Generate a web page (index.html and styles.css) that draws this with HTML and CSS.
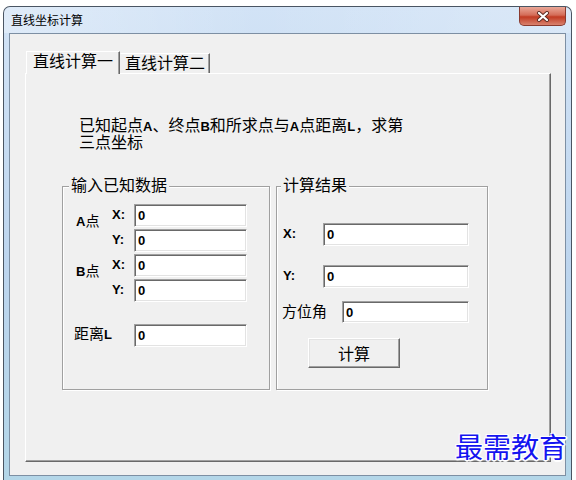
FILE: index.html
```html
<!DOCTYPE html>
<html lang="zh-CN">
<head>
    <meta charset="UTF-8">
    <meta name="viewport" content="width=device-width, initial-scale=1.0">
    <title>直线坐标计算</title>
    <link rel="stylesheet" href="styles.css">
</head>
<body>
    <div class="window">
        <div class="titlebar">
            <span class="title">直线坐标计算</span>
            <button class="close-btn">
                <svg width="14" height="11" viewBox="0 0 14 11">
                    <path d="M3 2 L11 9 M11 2 L3 9" stroke="#5a2a22" stroke-width="4" stroke-linecap="round"/>
                    <path d="M3 2 L11 9 M11 2 L3 9" stroke="#fff" stroke-width="2.2" stroke-linecap="round"/>
                </svg>
            </button>
        </div>

        <div class="client">
            <div class="tabs">
                <div class="tab active">直线计算一</div>
                <div class="tab second">直线计算二</div>
            </div>

            <div class="panel">
                <p class="desc">已知起点<b>A</b>、终点<b>B</b>和所求点与<b>A</b>点距离<b>L</b>，求第<br>三点坐标</p>

                <div class="groups">
                    <div class="group group-input">
                        <span class="group-title">输入已知数据</span>
                        <div class="input-body">
                            <div class="point">
                                <span class="pt-name"><b>A</b>点</span>
                                <div class="coords">
                                    <div class="row"><span class="axis">X:</span><input class="field" value="0"></div>
                                    <div class="row"><span class="axis">Y:</span><input class="field" value="0"></div>
                                </div>
                            </div>
                            <div class="point">
                                <span class="pt-name"><b>B</b>点</span>
                                <div class="coords">
                                    <div class="row"><span class="axis">X:</span><input class="field" value="0"></div>
                                    <div class="row"><span class="axis">Y:</span><input class="field" value="0"></div>
                                </div>
                            </div>
                            <div class="distance">
                                <span class="dist-label">距离<b>L</b></span>
                                <input class="field" value="0">
                            </div>
                        </div>
                    </div>

                    <div class="group group-result">
                        <span class="group-title">计算结果</span>
                        <div class="result-body">
                            <div class="result-row">
                                <span class="axis wide">X:</span>
                                <input class="field long" value="0">
                            </div>
                            <div class="result-row row-y">
                                <span class="axis wide">Y:</span>
                                <input class="field long" value="0">
                            </div>
                            <div class="result-row row-angle">
                                <span class="angle-label">方位角</span>
                                <input class="field mid" value="0">
                            </div>
                            <button class="calc-btn">计算</button>
                        </div>
                    </div>
                </div>
            </div>
        </div>
    </div>

    <div class="watermark">最需教育</div>
</body>
</html>
```

FILE: styles.css
```css
* {
    box-sizing: border-box;
}

body {
    margin: 0;
    width: 576px;
    height: 480px;
    overflow: hidden;
    position: relative;
    background: #fff;
    color: #000;
    font-family: 'Liberation Sans', 'Noto Sans CJK SC', sans-serif;
}

.window {
    margin: 6px 0 0 3px;
    width: 569px;
    height: 474px;
    border: 1px solid #4a5563;
    border-bottom: none;
    border-radius: 7px 7px 0 0;
    background: linear-gradient(to bottom, #d2e3f6, #bdd5ee 55%, #b3d6e8);
    display: flex;
    flex-direction: column;
}

.titlebar {
    height: 26px;
    display: flex;
    align-items: center;
    padding-left: 7px;
    border-radius: 6px 6px 0 0;
    background: linear-gradient(to right, rgba(255,255,255,0.3), rgba(255,255,255,0) 45%, rgba(255,255,255,0.2));
}

.title {
    font-size: 12px;
    line-height: 14px;
    margin-top: 1px;
}

.close-btn {
    margin-left: auto;
    margin-right: 5px;
    align-self: flex-start;
    width: 47px;
    height: 19px;
    padding: 0;
    border: 1px solid #8a3a2e;
    border-top: none;
    border-radius: 0 0 5px 5px;
    background: linear-gradient(#eaa898, #d46c58 45%, #c13b23 55%, #d9826e);
    display: flex;
    align-items: center;
    justify-content: center;
}

.client {
    margin: 0 5px;
    height: 443px;
    border: 1px solid #7d8fa3;
    background: #f0f0f0;
    padding: 17px 14px 0 15px;
}

.tabs {
    display: flex;
    align-items: flex-end;
    height: 22px;
    padding-left: 1px;
}

.tab {
    height: 20px;
    font-size: 16px;
    line-height: 18px;
    padding: 1px 4px 0 4px;
    border: 1px solid;
    border-color: #fff #696969 transparent #fff;
    border-bottom: none;
    box-shadow: inset -1px 0 0 #a0a0a0;
    background: #f0f0f0;
}

.tab.active {
    height: 23px;
    margin-bottom: -1px;
    padding: 1px 6px 0 6px;
    position: relative;
    z-index: 1;
}

.tab.second {
    border-left-color: #f0f0f0;
}

.panel {
    width: 526px;
    height: 389px;
    border: 1px solid;
    border-color: #fff #696969 #696969 #fff;
    box-shadow: inset -1px -1px 0 #a0a0a0;
    padding: 44px 0 0 36px;
}

.desc {
    margin: 0;
    padding-left: 17px;
    font-size: 16px;
    line-height: 16px;
    height: 32px;
}

.desc b {
    font-size: 13px;
}

.groups {
    display: flex;
    gap: 6px;
    margin-top: 36px;
}

.group {
    height: 204px;
    border: 1px solid #a0a0a0;
    box-shadow: inset 1px 1px 0 #fff, 1px 1px 0 #fff;
}

.group-input {
    width: 208px;
}

.group-result {
    width: 212px;
}

.group-title {
    display: block;
    width: fit-content;
    margin: -9px 0 0 6px;
    padding: 0 2px;
    background: #f0f0f0;
    font-size: 16px;
    line-height: 16px;
}

.group-result .group-title {
    margin-left: 4px;
}

.input-body {
    margin-top: 10px;
    padding-left: 13px;
}

.point {
    display: flex;
}

.point + .point {
    margin-top: 2px;
}

.pt-name {
    width: 36px;
    font-size: 14px;
    line-height: 16px;
    padding-top: 9px;
}

.pt-name b,
.dist-label b {
    font-size: 13px;
}

.coords {
    display: flex;
    flex-direction: column;
    gap: 2px;
}

.row,
.result-row {
    display: flex;
    align-items: center;
}

.axis {
    width: 22px;
    font-size: 13px;
    font-weight: bold;
    line-height: 16px;
    margin-top: -2px;
}

.axis.wide {
    width: 40px;
}

.distance {
    display: flex;
    align-items: center;
    margin: 22px 0 0 -2px;
}

.dist-label {
    width: 60px;
    font-size: 15px;
    line-height: 16px;
    margin-top: -3px;
}

.field {
    width: 113px;
    height: 23px;
    padding: 0 0 0 3px;
    border: 1px solid;
    border-color: #a0a0a0 #fff #fff #a0a0a0;
    box-shadow: inset 1px 1px 0 #696969, inset -1px -1px 0 #e3e3e3;
    background: #fff;
    color: #000;
    font: bold 13px 'Liberation Sans', sans-serif;
    outline: none;
}

.field.long {
    width: 146px;
}

.field.mid {
    width: 127px;
    height: 22px;
}

.result-body {
    margin-top: 29px;
    padding-left: 6px;
}

.row-y {
    margin-top: 19px;
}

.row-angle {
    margin: 13px 0 0 -1px;
}

.angle-label {
    width: 60px;
    font-size: 15px;
    line-height: 16px;
}

.calc-btn {
    display: block;
    margin: 15px 0 0 25px;
    width: 92px;
    height: 30px;
    border: 1px solid;
    border-color: #fff #696969 #696969 #fff;
    box-shadow: inset -1px -1px 0 #a0a0a0, inset 1px 1px 0 #e3e3e3;
    background: #f0f0f0;
    font-family: 'Liberation Sans', 'Noto Sans CJK SC', sans-serif;
    font-size: 16px;
    color: #000;
    padding: 0;
}

.watermark {
    position: absolute;
    left: 455px;
    top: 430px;
    font-family: 'Noto Sans CJK SC', sans-serif;
    font-size: 28px;
    line-height: 32px;
    color: #1414f0;
    text-shadow: 1px 1px 0 #fff, -1px -1px 0 #fff, 1px -1px 0 #fff, -1px 1px 0 #fff, 0 2px 1px #fff, 2px 0 1px #fff;
}
```
